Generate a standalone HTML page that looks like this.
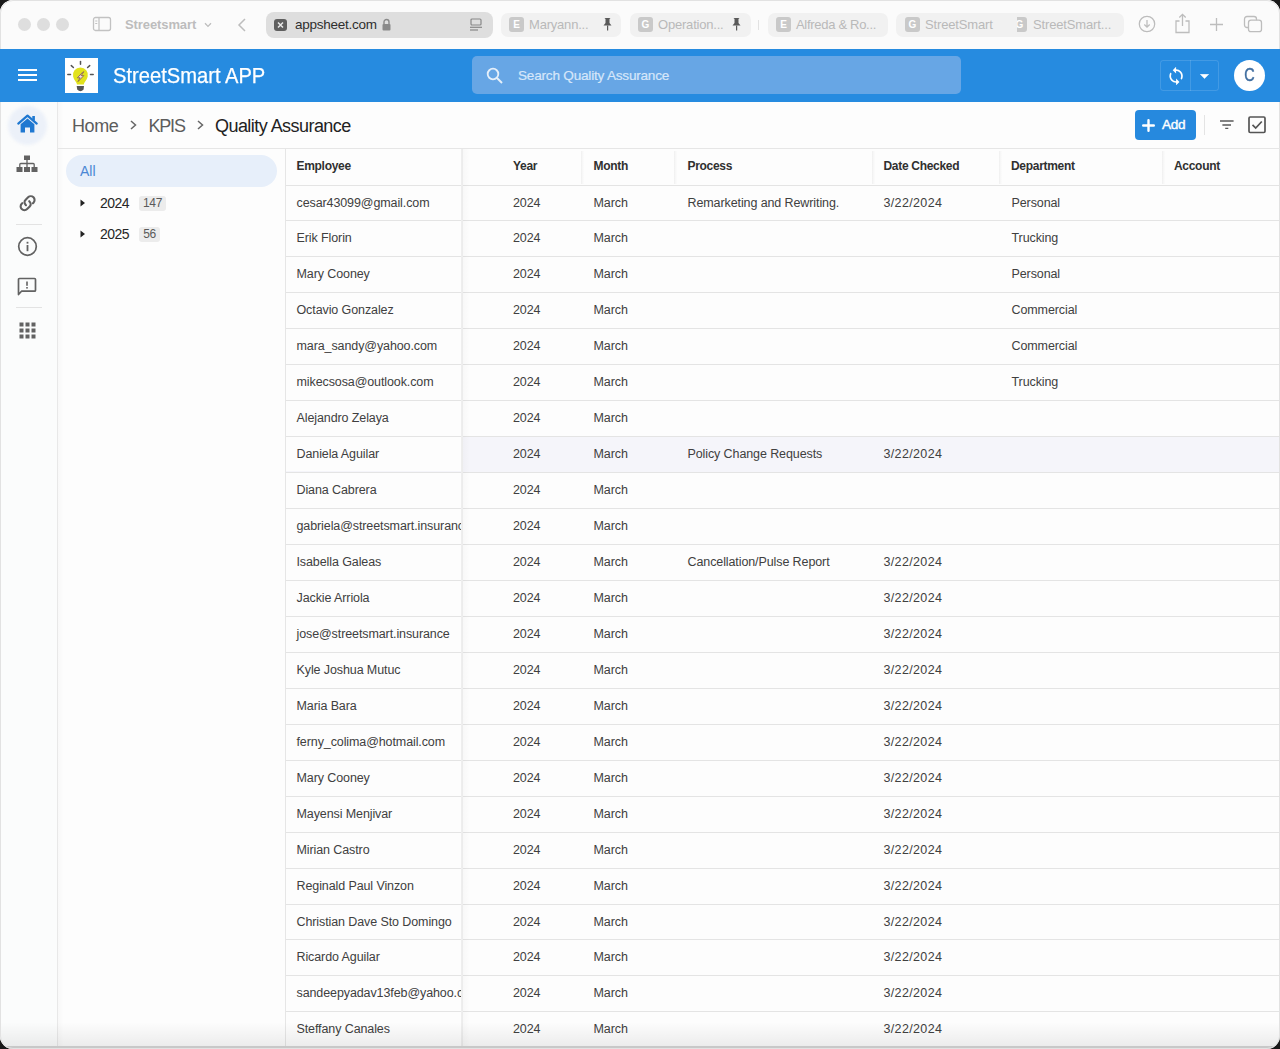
<!DOCTYPE html>
<html><head><meta charset="utf-8">
<style>
*{box-sizing:border-box;margin:0;padding:0}
html,body{width:1280px;height:1049px;overflow:hidden;background:#1a1a1a;font-family:"Liberation Sans",sans-serif}
#win{position:absolute;left:0;top:0;width:1280px;height:1049px;border-radius:13px;overflow:hidden;background:#fdfdfd}
#frame{position:absolute;left:0;top:0;width:1280px;height:1049px;border-radius:13px;border:1px solid #e2e2e2;pointer-events:none}
.abs{position:absolute}
/* chrome */
#chrome{position:absolute;left:0;top:0;width:1280px;height:49px;background:#fbfbfb}
.tl{position:absolute;top:18px;width:13px;height:13px;border-radius:50%;background:#dedede}
.ctext{position:absolute;font-size:13px;color:#b9b9b9;white-space:nowrap;line-height:16px}
.tab{position:absolute;top:13px;height:24px;border-radius:7px;background:#f1f1f1}
.fav{position:absolute;width:15px;height:15px;border-radius:3px;background:#c9c9c9;color:#fff;font-size:10px;font-weight:700;line-height:15px;text-align:center}
/* header */
#hdr{position:absolute;left:0;top:49px;width:1280px;height:53px;background:#268be0}
/* nav */
#nav{position:absolute;left:0;top:102px;width:58px;height:947px;background:#fbfcfc;border-right:1px solid #e8e8e8}
.sep{position:absolute;left:16px;width:26px;height:1px;background:#e3e3e3}
/* breadcrumb */
.bc{position:absolute;top:115px;font-size:18px;line-height:22px;white-space:nowrap;letter-spacing:-0.2px}
/* table */
.row{position:absolute;left:285px;width:995px;height:36px}
.rl{position:absolute;left:285px;width:995px;height:1px;background:#e4e4e4}
.row.hl{background:#f5f5fa}
.c.dt{letter-spacing:0.35px}
.c{position:absolute;top:0;line-height:37px;font-size:12.5px;color:#404040;white-space:nowrap;letter-spacing:-0.1px}
.c.emp{left:0;width:176px;padding-left:11.5px;overflow:hidden;height:35px}
.hl .c.emp{background:#fdfdfd}
.hc{position:absolute;top:148.2px;line-height:37px;font-size:12px;font-weight:700;color:#303030;white-space:nowrap;letter-spacing:-0.3px}
.hsep{position:absolute;top:151px;width:3px;height:33px;background:linear-gradient(to right,#efefef,#f7f7f7 50%,#fcfcfc)}
</style></head><body>
<div id="win">
 <div id="chrome">
  <div class="tl" style="left:18px"></div>
  <div class="tl" style="left:37px"></div>
  <div class="tl" style="left:56px"></div>
  <!-- sidebar icon -->
  <svg class="abs" style="left:92px;top:16px" width="20" height="16" viewBox="0 0 20 16"><rect x="1.5" y="1.5" width="17" height="13" rx="2" fill="none" stroke="#c2c2c2" stroke-width="1.3"/><line x1="7" y1="1.5" x2="7" y2="14.5" stroke="#c2c2c2" stroke-width="1.3"/><line x1="3.2" y1="5" x2="5.3" y2="5" stroke="#c2c2c2" stroke-width="1"/><line x1="3.2" y1="7.5" x2="5.3" y2="7.5" stroke="#c2c2c2" stroke-width="1"/></svg>
  <div class="ctext" style="left:125px;top:17px;font-weight:700;color:#bdbdbd;letter-spacing:-0.1px">Streetsmart</div>
  <svg class="abs" style="left:204px;top:22px" width="8" height="6" viewBox="0 0 8 6"><path d="M1 1.2 L4 4.4 L7 1.2" fill="none" stroke="#bdbdbd" stroke-width="1.3"/></svg>
  <svg class="abs" style="left:237px;top:18px" width="10" height="14" viewBox="0 0 10 14"><path d="M8 1 L2 7 L8 13" fill="none" stroke="#bdbdbd" stroke-width="1.5"/></svg>
  <!-- url bar -->
  <div class="abs" style="left:266px;top:12px;width:227px;height:26px;border-radius:8px;background:#dedede"></div>
  <div class="abs" style="left:274px;top:19px;width:13px;height:12px;border-radius:3px;background:#5f5f5f"></div>
  <svg class="abs" style="left:274px;top:19px" width="13" height="12" viewBox="0 0 13 12"><path d="M4 3.5 L9 8.5 M9 3.5 L4 8.5" stroke="#e8e8e8" stroke-width="1.5"/></svg>
  <div class="ctext" style="left:295px;top:17px;font-size:13.5px;color:#2e2e2e;letter-spacing:-0.25px">appsheet.com</div>
  <svg class="abs" style="left:381px;top:18px" width="11" height="13" viewBox="0 0 11 13"><path d="M3 6 V4 A2.5 2.5 0 0 1 8 4 V6" fill="none" stroke="#8a8a8a" stroke-width="1.4"/><rect x="1.5" y="6" width="8" height="6.5" rx="1" fill="#8a8a8a"/></svg>
  <svg class="abs" style="left:469px;top:18px" width="14" height="13" viewBox="0 0 14 13"><rect x="2" y="1" width="10" height="6" rx="1" fill="none" stroke="#888" stroke-width="1.2"/><line x1="1" y1="9.3" x2="13" y2="9.3" stroke="#888" stroke-width="1.2"/><line x1="1" y1="12" x2="9" y2="12" stroke="#888" stroke-width="1.2"/></svg>
  <!-- tabs -->
  <div class="tab" style="left:501px;width:120px"></div>
  <div class="fav" style="left:509px;top:17px">E</div>
  <div class="ctext" style="left:529px;top:17px;letter-spacing:-0.2px">Maryann...</div>
  <svg class="abs" style="left:602px;top:17px" width="11" height="14" viewBox="0 0 11 14"><path d="M2.5 1 H8.5 L7.5 2 V6 L9.5 8.5 H1.5 L3.5 6 V2 Z" fill="#5a5a5a"/><rect x="5" y="8.5" width="1.2" height="5" fill="#5a5a5a"/></svg>
  <div class="tab" style="left:630px;width:121px"></div>
  <div class="fav" style="left:638px;top:17px">G</div>
  <div class="ctext" style="left:658px;top:17px;letter-spacing:-0.2px">Operation...</div>
  <svg class="abs" style="left:731px;top:17px" width="11" height="14" viewBox="0 0 11 14"><path d="M2.5 1 H8.5 L7.5 2 V6 L9.5 8.5 H1.5 L3.5 6 V2 Z" fill="#5a5a5a"/><rect x="5" y="8.5" width="1.2" height="5" fill="#5a5a5a"/></svg>
  <div class="abs" style="left:758px;top:20px;width:1px;height:10px;background:#e2e2e2"></div>
  <div class="tab" style="left:768px;width:120px"></div>
  <div class="fav" style="left:776px;top:17px">E</div>
  <div class="ctext" style="left:796px;top:17px;letter-spacing:-0.3px">Alfreda &amp; Ro...</div>
  <div class="tab" style="left:896px;width:228px"></div>
  <div class="fav" style="left:905px;top:17px">G</div>
  <div class="ctext" style="left:925px;top:17px;letter-spacing:-0.15px">StreetSmart</div>
  <div class="fav" style="left:1012px;top:17px;width:15px">G</div>
  <div class="abs" style="left:1005px;top:14px;width:12px;height:22px;background:#f1f1f1"></div>
  <div class="ctext" style="left:1033px;top:17px;letter-spacing:-0.15px">StreetSmart...</div>
  <!-- right icons -->
  <svg class="abs" style="left:1138px;top:15px" width="18" height="18" viewBox="0 0 18 18"><circle cx="9" cy="9" r="7.7" fill="none" stroke="#bdbdbd" stroke-width="1.3"/><path d="M9 5 V12 M6.3 9.5 L9 12.2 L11.7 9.5" fill="none" stroke="#bdbdbd" stroke-width="1.3"/></svg>
  <svg class="abs" style="left:1174px;top:13px" width="17" height="21" viewBox="0 0 17 21"><path d="M5.5 8 H2 V19.5 H15 V8 H11.5" fill="none" stroke="#bdbdbd" stroke-width="1.3"/><path d="M8.5 13 V1.5 M5.3 4.5 L8.5 1.3 L11.7 4.5" fill="none" stroke="#bdbdbd" stroke-width="1.3"/></svg>
  <svg class="abs" style="left:1209px;top:17px" width="15" height="15" viewBox="0 0 15 15"><path d="M7.5 1 V14 M1 7.5 H14" stroke="#bdbdbd" stroke-width="1.3"/></svg>
  <svg class="abs" style="left:1243px;top:15px" width="20" height="18" viewBox="0 0 20 18"><rect x="1.5" y="1.5" width="12" height="11" rx="2.5" fill="none" stroke="#bdbdbd" stroke-width="1.3"/><rect x="5.5" y="5.2" width="13" height="11.5" rx="2.5" fill="#fbfbfb" stroke="#bdbdbd" stroke-width="1.3"/></svg>
 </div>

 <div id="hdr">
  <svg class="abs" style="left:18px;top:19px" width="19" height="14" viewBox="0 0 19 14"><path d="M0 2 H19 M0 7 H19 M0 12 H19" stroke="#fff" stroke-width="2"/></svg>
  <div class="abs" style="left:65px;top:9px;width:33px;height:35px;background:#fff"></div>
  <svg class="abs" style="left:65px;top:9px" width="33" height="35" viewBox="0 0 33 35">
   <g stroke="#555" stroke-width="1.5" stroke-linecap="round">
    <line x1="15.5" y1="3.6" x2="15.5" y2="6.2"/><line x1="6.3" y1="7.6" x2="8.4" y2="9.5"/><line x1="24.7" y1="7.6" x2="22.6" y2="9.5"/><line x1="2.8" y1="16.5" x2="5.5" y2="16.5"/><line x1="25.5" y1="16.5" x2="28.2" y2="16.5"/>
   </g>
   <path d="M8.1 18.6 A7.5 7.4 0 1 1 22.7 18.6 Q22.2 21.2 20.2 23.6 Q19 25 18.8 26.6 H12 Q11.8 25 10.6 23.6 Q8.6 21.2 8.1 18.6 Z" fill="#e2e21c"/>
   <path d="M11.7 28 H19 L18.6 31.5 Q15.4 35 12.2 31.5 Z" fill="#555"/>
   <path d="M18 13.8 L12.4 19.8 H15.1 L13 23.6 L18.8 17.6 H16.1 L18.8 13.8 Z" fill="#f0d8ee" stroke="#8c6a45" stroke-width="0.9" stroke-linejoin="round"/>
  </svg>
  <div class="abs" style="left:113px;top:14px;font-size:21.5px;line-height:26px;color:#fff;white-space:nowrap;transform:scaleX(0.937);transform-origin:0 0;-webkit-text-stroke:0.25px #fff">StreetSmart APP</div>
  <!-- search -->
  <div class="abs" style="left:472px;top:7px;width:489px;height:38px;border-radius:5px;background:#67a6e5"></div>
  <svg class="abs" style="left:486px;top:18px" width="18" height="18" viewBox="0 0 18 18"><circle cx="7" cy="7" r="5.3" fill="none" stroke="#e6f0fa" stroke-width="1.8"/><line x1="11" y1="11" x2="16" y2="16" stroke="#e6f0fa" stroke-width="1.9"/></svg>
  <div class="abs" style="left:518px;top:18.5px;font-size:13.6px;line-height:16px;color:#d6e7fa;white-space:nowrap;letter-spacing:-0.22px;-webkit-text-stroke:0.2px #d6e7fa">Search Quality Assurance</div>
  <!-- sync split button -->
  <div class="abs" style="left:1160px;top:11px;width:59px;height:31px;border:1px solid rgba(255,255,255,0.13);border-radius:3px"></div>
  <div class="abs" style="left:1190px;top:11px;width:1px;height:31px;background:rgba(255,255,255,0.13)"></div>
  <svg class="abs" style="left:1165.6px;top:17.2px" width="20.2" height="20.2" viewBox="0 0 24 24"><path fill="#fff" d="M12 4V1L8 5l4 4V6c3.31 0 6 2.69 6 6 0 1.01-.25 1.97-.7 2.8l1.46 1.46C19.54 15.03 20 13.57 20 12c0-4.42-3.58-8-8-8zm0 14c-3.31 0-6-2.690-6-6 0-1.01.25-1.97.7-2.8L5.240 7.74C4.460 8.97 4 10.43 4 12c0 4.42 3.58 8 8 8v3l4-4-4-4v3z"/></svg>
  <svg class="abs" style="left:1200px;top:25px" width="9" height="5" viewBox="0 0 9 5"><path d="M0.3 0.3 H8.7 L4.5 4.6 Z" fill="#fff" stroke="#fff" stroke-width="0.5" stroke-linejoin="round"/></svg>
  <div class="abs" style="left:1234px;top:11px;width:31px;height:31px;border-radius:50%;background:#fff;color:#3f6d9f;font-size:18px;font-weight:400;line-height:31px;text-align:center"><span style="display:inline-block;transform:scaleX(0.8);-webkit-text-stroke:0.45px #3f6d9f">C</span></div>
 </div>

 <div id="nav">
  <div class="abs" style="left:8px;top:4px;width:39px;height:39px;border-radius:50%;background:#ecf1f9;filter:blur(1.5px)"></div>
  <svg class="abs" style="left:17px;top:11px" width="22" height="20" viewBox="0 0 22 20"><path d="M1.3 10.6 L10.5 2.6 L19.7 10.6" fill="none" stroke="#1f78d1" stroke-width="2.2" stroke-linecap="round" stroke-linejoin="round"/><rect x="15.3" y="3" width="2.6" height="4.6" fill="#1f78d1"/><path d="M3.6 11.3 L10.5 5.4 L17.4 11.3 V19.6 H13 V14.6 H8 V19.6 H3.6 Z" fill="#1f78d1"/></svg>
  <!-- sitemap -->
  <svg class="abs" style="left:16px;top:53px" width="22" height="18" viewBox="0 0 22 18"><rect x="8" y="0.5" width="6" height="4.5" fill="#626262"/><path d="M11 5 V8.5 M3.8 12 V9.5 Q3.8 8.5 4.8 8.5 H17.2 Q18.2 8.5 18.2 9.5 V12 M11 8.5 V12" fill="none" stroke="#626262" stroke-width="1.3"/><rect x="0.5" y="12" width="6" height="5" fill="#626262"/><rect x="8" y="12" width="6" height="5" fill="#626262"/><rect x="15.5" y="12" width="6" height="5" fill="#626262"/></svg>
  <!-- link -->
  <svg class="abs" style="left:15px;top:88px" width="25" height="25" viewBox="15 190 25 25"><g transform="translate(27.6 203.2) rotate(-45)" fill="none" stroke="#606060" stroke-width="2.1" stroke-linecap="round"><path d="M-2.6 0.3 C-2.6 -2.4 -1.2 -3.8 0.8 -3.8 L4.5 -3.8 A3.8 3.8 0 0 1 4.5 3.8 L3.7 3.8"/><path d="M2.6 -0.3 C2.6 2.4 1.2 3.8 -0.8 3.8 L-4.5 3.8 A3.8 3.8 0 0 1 -4.5 -3.8 L-3.7 -3.8"/></g></svg>
  <div class="sep" style="top:122px"></div>
  <!-- info -->
  <svg class="abs" style="left:17px;top:134px" width="21" height="21" viewBox="0 0 21 21"><circle cx="10.5" cy="10.5" r="8.8" fill="none" stroke="#626262" stroke-width="1.7"/><rect x="9.6" y="9" width="1.8" height="6.2" fill="#626262"/><rect x="9.6" y="5.8" width="1.8" height="1.8" fill="#626262"/></svg>
  <!-- feedback -->
  <svg class="abs" style="left:17px;top:175px" width="20" height="20" viewBox="0 0 20 20"><path d="M1.5 17.5 V2.5 Q1.5 1.5 2.5 1.5 H17.5 Q18.5 1.5 18.5 2.5 V13.2 Q18.5 14.2 17.5 14.2 H4.5 Z" fill="none" stroke="#626262" stroke-width="1.7" stroke-linejoin="round"/><rect x="9.2" y="4.5" width="1.6" height="4.3" fill="#626262"/><rect x="9.2" y="10" width="1.6" height="1.6" fill="#626262"/></svg>
  <div class="sep" style="top:205px"></div>
  <!-- apps -->
  <svg class="abs" style="left:19px;top:220px" width="17" height="17" viewBox="0 0 17 17" fill="#626262"><rect x="0.5" y="0.5" width="4" height="4"/><rect x="6.5" y="0.5" width="4" height="4"/><rect x="12.5" y="0.5" width="4" height="4"/><rect x="0.5" y="6.5" width="4" height="4"/><rect x="6.5" y="6.5" width="4" height="4"/><rect x="12.5" y="6.5" width="4" height="4"/><rect x="0.5" y="12.5" width="4" height="4"/><rect x="6.5" y="12.5" width="4" height="4"/><rect x="12.5" y="12.5" width="4" height="4"/></svg>
 </div>

 <!-- breadcrumb bar -->
 <div class="abs" style="left:58px;top:148px;width:1222px;height:1px;background:#e6e6e6;z-index:2"></div>
 <div class="bc" style="left:72px;color:#5c5c5c;letter-spacing:-0.4px">Home</div>
 <svg class="abs" style="left:130px;top:120px" width="7" height="10" viewBox="0 0 7 10"><path d="M1 1 L5.5 5 L1 9" fill="none" stroke="#666" stroke-width="1.5"/></svg>
 <div class="bc" style="left:148.5px;color:#5c5c5c;letter-spacing:-1.2px">KPIS</div>
 <svg class="abs" style="left:197px;top:120px" width="7" height="10" viewBox="0 0 7 10"><path d="M1 1 L5.5 5 L1 9" fill="none" stroke="#666" stroke-width="1.5"/></svg>
 <div class="bc" style="left:215px;color:#222;letter-spacing:-0.55px">Quality Assurance</div>

 <!-- toolbar right -->
 <div class="abs" style="left:1135px;top:110px;width:61px;height:30px;border-radius:4px;background:#2689de"></div>
 <svg class="abs" style="left:1142px;top:118.5px" width="13" height="13" viewBox="0 0 13 13"><path d="M6.5 1.2 V11.8 M1.2 6.5 H11.8" stroke="#fff" stroke-width="2.4" stroke-linecap="round"/></svg>
 <div class="abs" style="left:1162px;top:116px;font-size:13.6px;font-weight:400;line-height:18px;color:#fff;white-space:nowrap;letter-spacing:-0.35px;-webkit-text-stroke:0.4px #fff">Add</div>
 <div class="abs" style="left:1204px;top:115px;width:1px;height:20px;background:#e4e4e4"></div>
 <svg class="abs" style="left:1219px;top:119px" width="15" height="11" viewBox="0 0 15 11"><path d="M1 2 H14.6 M3.4 6 H12 M6.2 9.4 H9.3" stroke="#5a5a5a" stroke-width="1.4"/></svg>
 <svg class="abs" style="left:1248px;top:116px" width="19" height="18" viewBox="0 0 19 18"><rect x="1" y="1" width="16" height="15.5" rx="1.2" fill="none" stroke="#555" stroke-width="1.7"/><path d="M4.5 8.8 L7.7 12 L13.8 5.5" fill="none" stroke="#555" stroke-width="1.7"/></svg>

 <!-- left filter panel -->
 <div class="abs" style="left:58px;top:148px;width:226px;height:901px;background:#fdfdfd"></div>
 <div class="abs" style="left:66px;top:155px;width:211px;height:31.5px;border-radius:16px;background:#e7effa"></div>
 <div class="abs" style="left:80px;top:163px;font-size:14px;line-height:16px;color:#4b87d4;white-space:nowrap">All</div>
 <svg class="abs" style="left:80px;top:199px" width="6" height="8" viewBox="0 0 6 8"><path d="M0.5 0.5 L5 4 L0.5 7.5 Z" fill="#222"/></svg>
 <div class="abs" style="left:100px;top:195px;font-size:14px;line-height:16px;color:#262626;white-space:nowrap;letter-spacing:-0.5px">2024</div>
 <div class="abs" style="left:139px;top:196px;width:27px;height:15px;border-radius:3px;background:#ececec;color:#5a5a5a;font-size:12px;line-height:15px;text-align:center;letter-spacing:-0.3px">147</div>
 <svg class="abs" style="left:80px;top:230px" width="6" height="8" viewBox="0 0 6 8"><path d="M0.5 0.5 L5 4 L0.5 7.5 Z" fill="#222"/></svg>
 <div class="abs" style="left:100px;top:226px;font-size:14px;line-height:16px;color:#262626;white-space:nowrap;letter-spacing:-0.5px">2025</div>
 <div class="abs" style="left:139px;top:227px;width:21px;height:15px;border-radius:3px;background:#ececec;color:#5a5a5a;font-size:12px;line-height:15px;text-align:center;letter-spacing:-0.3px">56</div>
 

 <!-- table header -->
 <div class="abs" style="left:285px;top:148px;width:993px;height:37px;background:#fdfdfd"></div>
 <div class="hsep" style="left:581px"></div>
 <div class="hsep" style="left:674px"></div>
 <div class="hsep" style="left:872px"></div>
 <div class="hsep" style="left:999px"></div>
 <div class="hsep" style="left:1162px"></div>
 <div class="hc" style="left:296.5px">Employee</div>
 <div class="hc" style="left:513px">Year</div>
 <div class="hc" style="left:593.5px">Month</div>
 <div class="hc" style="left:687.5px">Process</div>
 <div class="hc" style="left:883.5px">Date Checked</div>
 <div class="hc" style="left:1011px">Department</div>
 <div class="hc" style="left:1174px">Account</div>

<div class="row" style="top:184.50px"><div class="c emp">cesar43099@gmail.com</div><div class="c" style="left:228px">2024</div><div class="c" style="left:308.5px">March</div><div class="c" style="left:402.5px">Remarketing and Rewriting.</div><div class="c dt" style="left:598.5px">3/22/2024</div><div class="c" style="left:726.5px">Personal</div></div>
<div class="row" style="top:220.45px"><div class="c emp">Erik Florin</div><div class="c" style="left:228px">2024</div><div class="c" style="left:308.5px">March</div><div class="c" style="left:726.5px">Trucking</div></div>
<div class="row" style="top:256.40px"><div class="c emp">Mary Cooney</div><div class="c" style="left:228px">2024</div><div class="c" style="left:308.5px">March</div><div class="c" style="left:726.5px">Personal</div></div>
<div class="row" style="top:292.35px"><div class="c emp">Octavio Gonzalez</div><div class="c" style="left:228px">2024</div><div class="c" style="left:308.5px">March</div><div class="c" style="left:726.5px">Commercial</div></div>
<div class="row" style="top:328.30px"><div class="c emp">mara_sandy@yahoo.com</div><div class="c" style="left:228px">2024</div><div class="c" style="left:308.5px">March</div><div class="c" style="left:726.5px">Commercial</div></div>
<div class="row" style="top:364.25px"><div class="c emp">mikecsosa@outlook.com</div><div class="c" style="left:228px">2024</div><div class="c" style="left:308.5px">March</div><div class="c" style="left:726.5px">Trucking</div></div>
<div class="row" style="top:400.20px"><div class="c emp">Alejandro Zelaya</div><div class="c" style="left:228px">2024</div><div class="c" style="left:308.5px">March</div></div>
<div class="row hl" style="top:436.15px"><div class="c emp">Daniela Aguilar</div><div class="c" style="left:228px">2024</div><div class="c" style="left:308.5px">March</div><div class="c" style="left:402.5px">Policy Change Requests</div><div class="c dt" style="left:598.5px">3/22/2024</div></div>
<div class="row" style="top:472.10px"><div class="c emp">Diana Cabrera</div><div class="c" style="left:228px">2024</div><div class="c" style="left:308.5px">March</div></div>
<div class="row" style="top:508.05px"><div class="c emp">gabriela@streetsmart.insurance</div><div class="c" style="left:228px">2024</div><div class="c" style="left:308.5px">March</div></div>
<div class="row" style="top:544.00px"><div class="c emp">Isabella Galeas</div><div class="c" style="left:228px">2024</div><div class="c" style="left:308.5px">March</div><div class="c" style="left:402.5px">Cancellation/Pulse Report</div><div class="c dt" style="left:598.5px">3/22/2024</div></div>
<div class="row" style="top:579.95px"><div class="c emp">Jackie Arriola</div><div class="c" style="left:228px">2024</div><div class="c" style="left:308.5px">March</div><div class="c dt" style="left:598.5px">3/22/2024</div></div>
<div class="row" style="top:615.90px"><div class="c emp">jose@streetsmart.insurance</div><div class="c" style="left:228px">2024</div><div class="c" style="left:308.5px">March</div><div class="c dt" style="left:598.5px">3/22/2024</div></div>
<div class="row" style="top:651.85px"><div class="c emp">Kyle Joshua Mutuc</div><div class="c" style="left:228px">2024</div><div class="c" style="left:308.5px">March</div><div class="c dt" style="left:598.5px">3/22/2024</div></div>
<div class="row" style="top:687.80px"><div class="c emp">Maria Bara</div><div class="c" style="left:228px">2024</div><div class="c" style="left:308.5px">March</div><div class="c dt" style="left:598.5px">3/22/2024</div></div>
<div class="row" style="top:723.75px"><div class="c emp">ferny_colima@hotmail.com</div><div class="c" style="left:228px">2024</div><div class="c" style="left:308.5px">March</div><div class="c dt" style="left:598.5px">3/22/2024</div></div>
<div class="row" style="top:759.70px"><div class="c emp">Mary Cooney</div><div class="c" style="left:228px">2024</div><div class="c" style="left:308.5px">March</div><div class="c dt" style="left:598.5px">3/22/2024</div></div>
<div class="row" style="top:795.65px"><div class="c emp">Mayensi Menjivar</div><div class="c" style="left:228px">2024</div><div class="c" style="left:308.5px">March</div><div class="c dt" style="left:598.5px">3/22/2024</div></div>
<div class="row" style="top:831.60px"><div class="c emp">Mirian Castro</div><div class="c" style="left:228px">2024</div><div class="c" style="left:308.5px">March</div><div class="c dt" style="left:598.5px">3/22/2024</div></div>
<div class="row" style="top:867.55px"><div class="c emp">Reginald Paul Vinzon</div><div class="c" style="left:228px">2024</div><div class="c" style="left:308.5px">March</div><div class="c dt" style="left:598.5px">3/22/2024</div></div>
<div class="row" style="top:903.50px"><div class="c emp">Christian Dave Sto Domingo</div><div class="c" style="left:228px">2024</div><div class="c" style="left:308.5px">March</div><div class="c dt" style="left:598.5px">3/22/2024</div></div>
<div class="row" style="top:939.45px"><div class="c emp">Ricardo Aguilar</div><div class="c" style="left:228px">2024</div><div class="c" style="left:308.5px">March</div><div class="c dt" style="left:598.5px">3/22/2024</div></div>
<div class="row" style="top:975.40px"><div class="c emp">sandeepyadav13feb@yahoo.com</div><div class="c" style="left:228px">2024</div><div class="c" style="left:308.5px">March</div><div class="c dt" style="left:598.5px">3/22/2024</div></div>
<div class="row" style="top:1011.35px"><div class="c emp">Steffany Canales</div><div class="c" style="left:228px">2024</div><div class="c" style="left:308.5px">March</div><div class="c dt" style="left:598.5px">3/22/2024</div></div>
<div class="rl" style="top:185px"></div>
<div class="rl" style="top:220px"></div>
<div class="rl" style="top:256px"></div>
<div class="rl" style="top:292px"></div>
<div class="rl" style="top:328px"></div>
<div class="rl" style="top:364px"></div>
<div class="rl" style="top:400px"></div>
<div class="rl" style="top:436px"></div>
<div class="rl" style="top:472px"></div>
<div class="rl" style="top:508px"></div>
<div class="rl" style="top:544px"></div>
<div class="rl" style="top:580px"></div>
<div class="rl" style="top:616px"></div>
<div class="rl" style="top:652px"></div>
<div class="rl" style="top:688px"></div>
<div class="rl" style="top:724px"></div>
<div class="rl" style="top:760px"></div>
<div class="rl" style="top:796px"></div>
<div class="rl" style="top:832px"></div>
<div class="rl" style="top:868px"></div>
<div class="rl" style="top:904px"></div>
<div class="rl" style="top:939px"></div>
<div class="rl" style="top:975px"></div>
<div class="rl" style="top:1011px"></div>
<div class="rl" style="top:1047px"></div>

 <!-- sticky col border + shadow -->
 <div class="abs" style="left:461px;top:149px;width:2px;height:900px;background:linear-gradient(to right,#ececec,#f3f3f3)"></div>
 <div class="abs" style="left:462px;top:149px;width:8px;height:900px;background:linear-gradient(to right,rgba(0,0,0,0.025),rgba(0,0,0,0))"></div>
 <div class="abs" style="left:285px;top:148px;width:1px;height:901px;background:#e6e6e6"></div>
 <div class="abs" style="left:58px;top:102px;width:6px;height:947px;background:linear-gradient(to right,rgba(0,0,0,0.02),rgba(0,0,0,0))"></div>
 <!-- bottom shading -->
 <div class="abs" style="left:0;top:1022px;width:1280px;height:25px;background:linear-gradient(to bottom,rgba(0,0,0,0),rgba(0,0,0,0.07))"></div>
 <div class="abs" style="left:0;top:1046px;width:1280px;height:3px;background:#c8c8c8"></div>
</div>
<div id="frame"></div>
<div style="position:absolute;left:0;top:49px;width:1px;height:53px;background:#268be0"></div>
<div style="position:absolute;left:1279px;top:49px;width:1px;height:53px;background:#268be0"></div>
</body></html>
